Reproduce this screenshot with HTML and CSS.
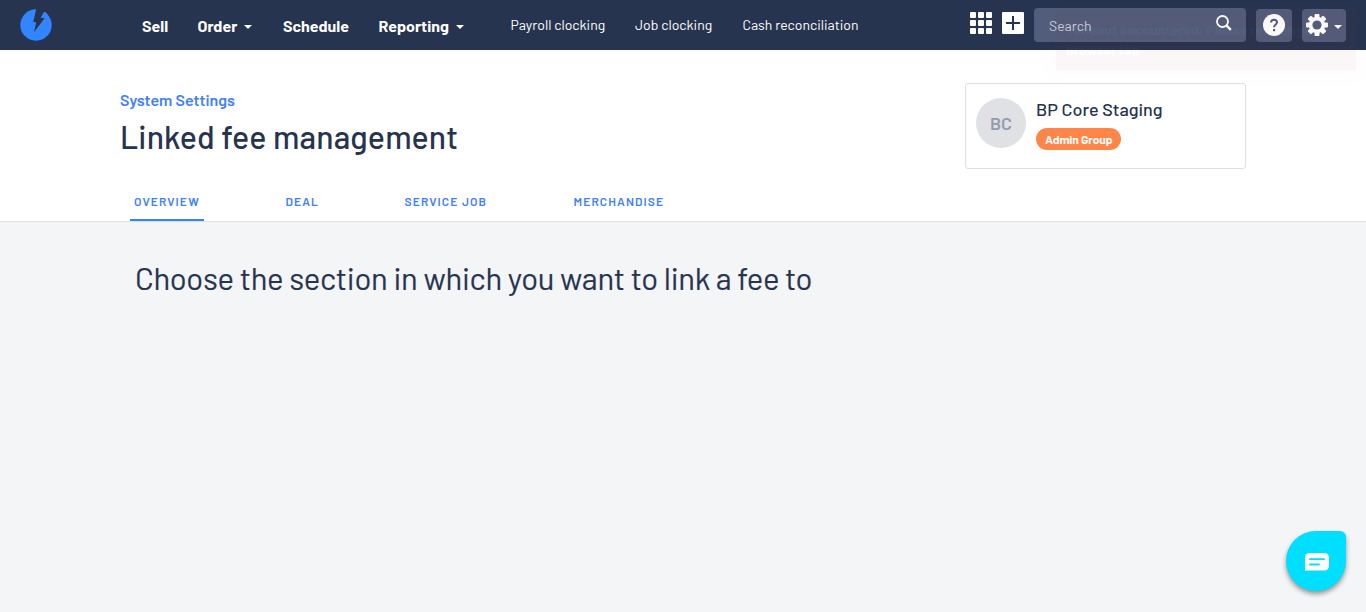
FILE: index.html
```html
<!DOCTYPE html>
<html lang="en">
<head>
<meta charset="utf-8">
<title>Linked fee management</title>
<link rel="stylesheet" href="styles.css">
</head>
<body>
<header class="topbar">
  <a class="logo"><svg width="32" height="32" viewBox="0 0 32 32"><circle cx="16" cy="16" r="15.7" fill="#3385ff"/><path d="M16.2 0 24.5 0 26.5 1.5 20.8 8.6 24.6 9.2 14 23.2 16.2 13.2 13.2 13Z" fill="#27344f"/><path d="M24 2.7 20.8 8.7 24.6 9.2 27.6 5Z" fill="#3385ff"/></svg></a>
  <nav class="nav-main">
    <a class="n-sell">Sell</a>
    <a class="n-order">Order<i class="caret"></i></a>
    <a class="n-schedule">Schedule</a>
    <a class="n-reporting">Reporting<i class="caret"></i></a>
  </nav>
  <nav class="nav-sub">
    <a class="n-payroll">Payroll clocking</a>
    <a class="n-job">Job clocking</a>
    <a class="n-cash">Cash reconciliation</a>
  </nav>
  <div class="tools">
    <svg class="grid-icon" width="22" height="22" viewBox="0 0 22 22" fill="#fff"><rect width="6" height="6" rx="1"/><rect x="8" width="6" height="6" rx="1"/><rect x="16" width="6" height="6" rx="1"/><rect y="8" width="6" height="6" rx="1"/><rect x="8" y="8" width="6" height="6" rx="1"/><rect x="16" y="8" width="6" height="6" rx="1"/><rect y="16" width="6" height="6" rx="1"/><rect x="8" y="16" width="6" height="6" rx="1"/><rect x="16" y="16" width="6" height="6" rx="1"/></svg>
    <svg class="plus-icon" width="22" height="22" viewBox="0 0 22 22"><rect width="22" height="22" rx="1" fill="#fff"/><path d="M11 4v14M4 11h14" stroke="#27344f" stroke-width="2"/></svg>
    <div class="search"><span class="search-text">Search</span><svg width="16" height="16" viewBox="0 0 16 16" fill="none" stroke="#fff"><circle cx="6.5" cy="6.5" r="5.5" stroke-width="1.8"/><path d="m10.6 10.6 4.2 4.2" stroke-width="2.4"/></svg></div>
    <div class="tool help"><svg width="22" height="22" viewBox="0 0 22 22"><circle cx="11" cy="11" r="11" fill="#fff"/><path d="M8 8.4C8 4.8 14 4.9 14 8.3c0 2.2-2.9 2.2-2.9 4.9" fill="none" stroke="#515d7b" stroke-width="2"/><rect x="10" y="15" width="2.2" height="2.2" fill="#515d7b"/></svg></div>
    <div class="tool settings"><svg width="22" height="22" viewBox="-11 -11 22 22"><g fill="#fff"><rect x="-2.5" y="-11" width="5" height="22" rx="1"/><rect x="-2.5" y="-11" width="5" height="22" rx="1" transform="rotate(45)"/><rect x="-2.5" y="-11" width="5" height="22" rx="1" transform="rotate(90)"/><rect x="-2.5" y="-11" width="5" height="22" rx="1" transform="rotate(135)"/><circle r="8.2"/></g><circle r="4.6" fill="#515d7b"/></svg><i class="caret"></i></div>
  </div>
</header>
<section class="page-head">
  <div class="head-row">
    <div class="titles">
      <a class="crumb">System Settings</a>
      <h1>Linked fee management</h1>
    </div>
    <div class="account">
      <div class="avatar"><span>BC</span></div>
      <div class="account-info">
        <div class="account-name">BP Core Staging</div>
        <div class="badge"><span>Admin Group</span></div>
      </div>
    </div>
  </div>
  <nav class="tabs">
    <a class="tab t-overview active">OVERVIEW</a>
    <a class="tab t-deal">DEAL</a>
    <a class="tab t-service">SERVICE JOB</a>
    <a class="tab t-merch">MERCHANDISE</a>
  </nav>
</section>
<main><h2>Choose the section in which you want to link a fee to</h2></main>
<div class="toast">Timeout encountered: Please refresh your<br>browser tab</div>
<div class="chat"><svg width="24" height="18" viewBox="0 0 24 18"><path d="M5 0h14q5 0 5 5v7q0 5.5-5 5.5H0V5q0-5 5-5Z" fill="#fff"/><path d="M5 6.2h14M5 11.5h9" stroke="#00dfff" stroke-width="1.8" stroke-linecap="round"/></svg></div>
</body>
</html>
```
FILE: styles.css
```css
* { box-sizing: border-box; }
body { margin: 0; height: 612px; overflow: hidden; background: #f3f5f7; color: #27344f; font-family: Barlow, Roboto, sans-serif; }
a, span { white-space: nowrap; }
.topbar { display: flex; height: 50px; background: #27344f; color: #fff; }
.logo { width: 32px; margin: 9px 0 0 20px; }
.nav-main { display: flex; width: 368.5px; margin-left: 90px; font-size: 16px; font-weight: 700; line-height: 18px; padding-top: 17px; }
.nav-main a { display: flex; flex: none; }
.n-sell { width: 55.5px; }
.n-order { width: 85.5px; }
.n-schedule { width: 95.5px; }
.caret { width: 0; height: 0; border: 4px solid transparent; border-top-color: #fff; border-bottom: 0; margin: 8px 0 0 7px; }
.nav-sub { display: flex; flex: none; padding-top: 16px; font-size: 14px; line-height: 17px; width: 459.5px; }
.n-payroll { width: 124.5px; }
.n-job { width: 107.5px; }
.tools { display: flex; flex: none; }
.grid-icon { margin: 12px 10px 0 0; }
.plus-icon { margin: 12px 10px 0 0; }
.search { display: flex; justify-content: space-between; width: 212px; height: 34px; margin-top: 8px; padding: 7px 14px 0 15px; border-radius: 4px; background: #515d7b; }
.search-text { font-size: 14px; line-height: 22px; color: #c9cedb; }
.tool { height: 33px; margin: 9px 0 0 10px; border-radius: 4px; background: #515d7b; display: flex; }
.help { width: 36px; padding: 5px 0 0 7px; }
.settings { width: 44px; padding: 5px 0 0 4px; }
.settings .caret { margin: 11px 0 0 6px; }
.page-head { height: 172px; background: #fff; border-bottom: 1px solid #dedfe2; }
.head-row { display: flex; justify-content: space-between; height: 137px; padding: 33px 120px 0; }
.titles { padding-top: 7px; }
.crumb { display: block; font-size: 16px; font-weight: 600; line-height: 20px; color: #3f80fb; }
h1 { margin: 6px 0 0; font-size: 32px; font-weight: 500; line-height: 40px; letter-spacing: .13px; white-space: nowrap; }
.account { display: flex; width: 281px; height: 86px; border: 1px solid #dedfe2; border-radius: 3px; padding: 14px 10px; }
.avatar { width: 50px; height: 50px; border-radius: 50%; background: #dfe1e5; color: #949cab; font-size: 18px; font-weight: 600; line-height: 51px; text-align: center; }
.account-info { margin-left: 10px; }
.account-name { font-size: 18px; line-height: 22px; font-weight: 500; white-space: nowrap; }
.badge { width: 85px; height: 22px; margin-top: 8px; border-radius: 11px; background: #ff8549; color: #fff; font-size: 12px; font-weight: 700; line-height: 23px; letter-spacing: -.1px; padding-left: 9px; }
.tabs { display: flex; height: 34px; padding-left: 130px; color: #3f80fb; font-size: 12px; font-weight: 600; line-height: 28px; letter-spacing: 1.1px; }
.tab { flex: none; padding-left: 4px; }
.t-overview { width: 74px; border-bottom: 2px solid #3385ff; }
.t-deal { margin-left: 77.5px; width: 119px; }
.t-service { width: 169px; }
main { padding: 36px 135px; }
h2 { margin: 0; font-size: 31px; font-weight: 400; line-height: 39px; letter-spacing: -.28px; -webkit-text-stroke: .2px #27344f; white-space: nowrap; }
.toast { position: absolute; left: 1056px; top: 10px; width: 300px; height: 60px; padding: 10px; color: #9ff; background: #bd362f; opacity: .03; font-size: 14px; font-weight: 600; line-height: 20px; white-space: nowrap; box-shadow: 0 0 12px #999; }
.chat { position: absolute; left: 1286px; top: 531px; width: 60px; height: 60px; border-radius: 30px 6px 30px 30px; background: #00dfff; box-shadow: 0 3px 5px rgba(0,0,0,.4); padding: 22px 0 0 19px; }
```
